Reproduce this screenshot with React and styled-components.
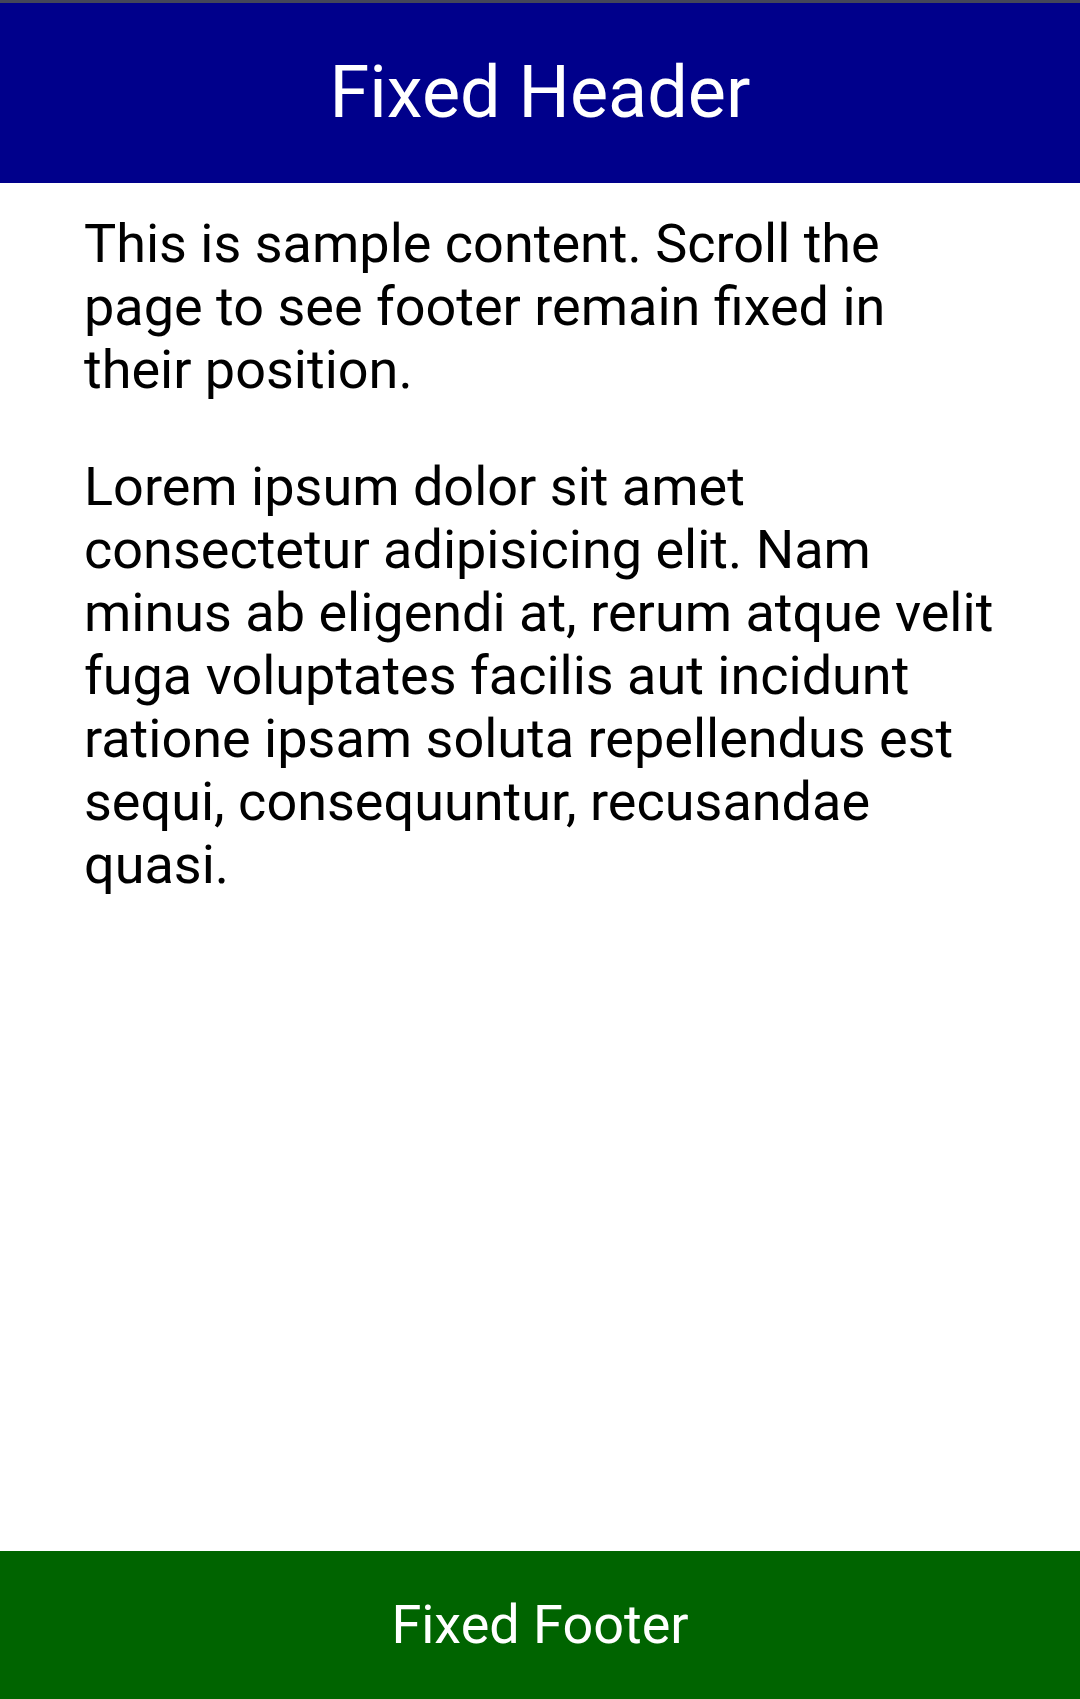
import React from "react";
import styled, { createGlobalStyle } from "styled-components";

const GlobalStyle = createGlobalStyle`
  *, *::before, *::after { box-sizing: border-box; }
  body { margin: 0; background: #fff; color: #000; font-family: Roboto, "Liberation Sans", sans-serif; }
`;

const Page = styled.div`
  display: flex;
  flex-direction: column;
  min-height: 100vh;
`;

const Header = styled.header`
  position: sticky;
  top: 0;
  display: flex;
  align-items: center;
  justify-content: center;
  padding: 48px 24px;
  border-top: 3px solid #44465a;
  background: #00008b;
  color: #fff;
`;

const Title = styled.h1`
  margin: 0;
  font-size: 72px;
  font-weight: 400;
  line-height: 84px;
`;

const Content = styled.main`
  flex: 1;
  display: flex;
  flex-direction: column;
  gap: 54px;
  padding: 29px 84px;
`;

const Paragraph = styled.p`
  margin: 0;
  font-size: 54px;
  line-height: 63px;
`;

const Footer = styled.footer`
  position: sticky;
  bottom: 0;
  padding: 42px 24px 43px;
  background: #006400;
  color: #fff;
  font-size: 54px;
  line-height: 63px;
  text-align: center;
`;

export default function App() {
  return (
    <Page>
      <GlobalStyle />
      <Header>
        <Title>Fixed Header</Title>
      </Header>
      <Content>
        <Paragraph>
          This is sample content. Scroll the page to see footer remain fixed in
          their position.
        </Paragraph>
        <Paragraph>
          Lorem ipsum dolor sit amet consectetur adipisicing elit. Nam minus ab
          eligendi at, rerum atque velit fuga voluptates facilis aut incidunt
          ratione ipsam soluta repellendus est sequi, consequuntur, recusandae
          quasi.
        </Paragraph>
      </Content>
      <Footer>Fixed Footer</Footer>
    </Page>
  );
}
